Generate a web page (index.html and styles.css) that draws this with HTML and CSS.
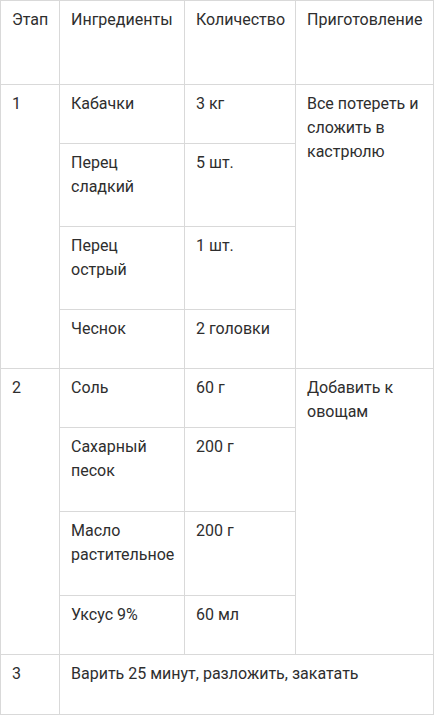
FILE: index.html
```html
<!DOCTYPE html>
<html lang="ru">
<head>
<meta charset="utf-8">
<link rel="stylesheet" href="styles.css">
</head>
<body>
<table class="recipe">
  <colgroup>
    <col class="c1"><col class="c2"><col class="c3"><col class="c4">
  </colgroup>
  <tr class="head">
    <td>Этап</td>
    <td>Ингредиенты</td>
    <td>Количество</td>
    <td>Приготовление</td>
  </tr>
  <tr>
    <td rowspan="4">1</td>
    <td>Кабачки</td>
    <td>3 кг</td>
    <td rowspan="4">Все потереть и сложить в кастрюлю</td>
  </tr>
  <tr>
    <td>Перец сладкий</td>
    <td>5 шт.</td>
  </tr>
  <tr>
    <td>Перец острый</td>
    <td>1 шт.</td>
  </tr>
  <tr>
    <td>Чеснок</td>
    <td>2 головки</td>
  </tr>
  <tr>
    <td rowspan="4">2</td>
    <td>Соль</td>
    <td>60 г</td>
    <td rowspan="4">Добавить к овощам</td>
  </tr>
  <tr class="tall">
    <td>Сахарный песок</td>
    <td>200 г</td>
  </tr>
  <tr class="tall">
    <td>Масло растительное</td>
    <td>200 г</td>
  </tr>
  <tr>
    <td>Уксус 9%</td>
    <td>60 мл</td>
  </tr>
  <tr class="tall">
    <td>3</td>
    <td colspan="3">Варить 25 минут, разложить, закатать</td>
  </tr>
</table>
</body>
</html>
```
FILE: styles.css
```css
html, body {
  margin: 0;
  padding: 0;
  background: #fff;
}
.recipe {
  border-collapse: collapse;
  width: 433px;
  table-layout: fixed;
  font-family: Roboto, "Noto Sans", sans-serif;
  font-size: 16px;
  line-height: 24px;
  color: #2e2e2e;
}
.c1 { width: 59px; }
.c2 { width: 125px; }
.c3 { width: 111px; }
.c4 { width: 138px; }
.recipe td {
  border: 1px solid #d9d9d9;
  vertical-align: top;
  padding: 7px 11px 27px;
  text-align: left;
}
.recipe .tall td {
  padding-bottom: 28px;
}
.recipe .head td {
  height: 49px;
  padding-top: 7px;
}
```
